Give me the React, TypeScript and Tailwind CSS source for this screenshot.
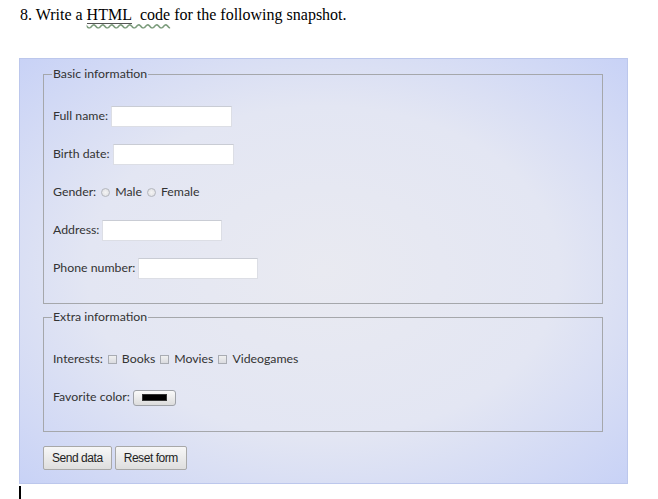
const TextBox = ({ w = "w-[121px]" }: { w?: string }) => (
  <span className={`inline-block ${w} h-[21px] ml-[3px] bg-white border border-[#dcdee5] border-t-[#c9ccd4]`} />
);

const Radio = () => (
  <span className="inline-block w-[9px] h-[9px] mx-[5px] rounded-full border border-[#b3b6bd] bg-[radial-gradient(circle,#f4f4f4_0%,#dcdde0_100%)]" />
);

const Check = () => (
  <span className="inline-block w-[9px] h-[9px] mx-[5px] border border-[#a9acb3] bg-[linear-gradient(#f0f0f0,#dadbdf)]" />
);

const Row = ({ children }: { children: React.ReactNode }) => (
  <div className="flex items-center h-[21px] text-[12.3px] text-[#333] whitespace-pre">{children}</div>
);

const Btn = ({ label }: { label: string }) => (
  <button className="h-[24px] px-[8px] border border-[#a8a8a8] rounded-[2px] bg-[linear-gradient(#f7f7f7,#dedede)] text-[12px] text-[#222] tracking-[-0.45px] [font-family:'Liberation_Sans',Arial,sans-serif]">
    {label}
  </button>
);

export default function App() {
  return (
    <div className="w-[658px] h-[499px] bg-white overflow-hidden">
      <div className="h-[58px] pl-[20px] pt-[5px] text-[16px] leading-[20px] text-black [font-family:'Liberation_Serif','Times_New_Roman',serif]">
        8. Write a{" "}
        <span className="underline decoration-wavy decoration-[#7c9c7c] underline-offset-[3px]">
          <span className="border-b border-[#555]">HTML</span>&nbsp; code
        </span>{" "}
        for the following snapshot.
      </div>

      <div className="ml-[19px] w-[609px] border border-[#bcc7ec] pt-[7px] pb-[13px] pl-[23px] pr-[24px] bg-[radial-gradient(ellipse_at_center,#e9eaf1_0%,#e3e6f3_55%,#c8d2f6_100%)] [font-family:Lato,'Open_Sans',sans-serif]">
        <fieldset className="border border-[#a5a7ab] pl-[9px] pt-[24px] pb-[24px]">
          <legend className="-ml-[1px] px-[1px] leading-[16px] text-[12.3px] text-[#333]">Basic information</legend>
          <div className="flex flex-col gap-[17px]">
            <Row>Full name:<TextBox /></Row>
            <Row>Birth date:<TextBox /></Row>
            <Row>
              Gender:<Radio />Male<Radio />Female
            </Row>
            <Row>Address:<TextBox w="w-[120px]" /></Row>
            <Row>Phone number:<TextBox w="w-[120px]" /></Row>
          </div>
        </fieldset>

        <fieldset className="mt-[5px] border border-[#a5a7ab] pl-[9px] pt-[24px] pb-[23px]">
          <legend className="-ml-[1px] px-[1px] leading-[16px] text-[12.3px] text-[#333]">Extra information</legend>
          <div className="flex flex-col gap-[17px]">
            <Row>
              Interests:<Check />Books<Check />Movies<Check />Videogames
            </Row>
            <Row>
              Favorite color:
              <span className="ml-[3px] inline-flex items-center justify-center w-[43px] h-[16px] border border-[#9fa2a8] rounded-[3px] bg-[linear-gradient(#fafafa,#dcdcdc)]">
                <span className="w-[25px] h-[7px] bg-black border border-[#333]" />
              </span>
            </Row>
          </div>
        </fieldset>

        <div className="mt-[14px] flex gap-[3px]">
          <Btn label="Send data" />
          <Btn label="Reset form" />
        </div>
      </div>

      <div className="ml-[19px] mt-[2px] w-[2px] h-[13px] bg-black" />
    </div>
  );
}
